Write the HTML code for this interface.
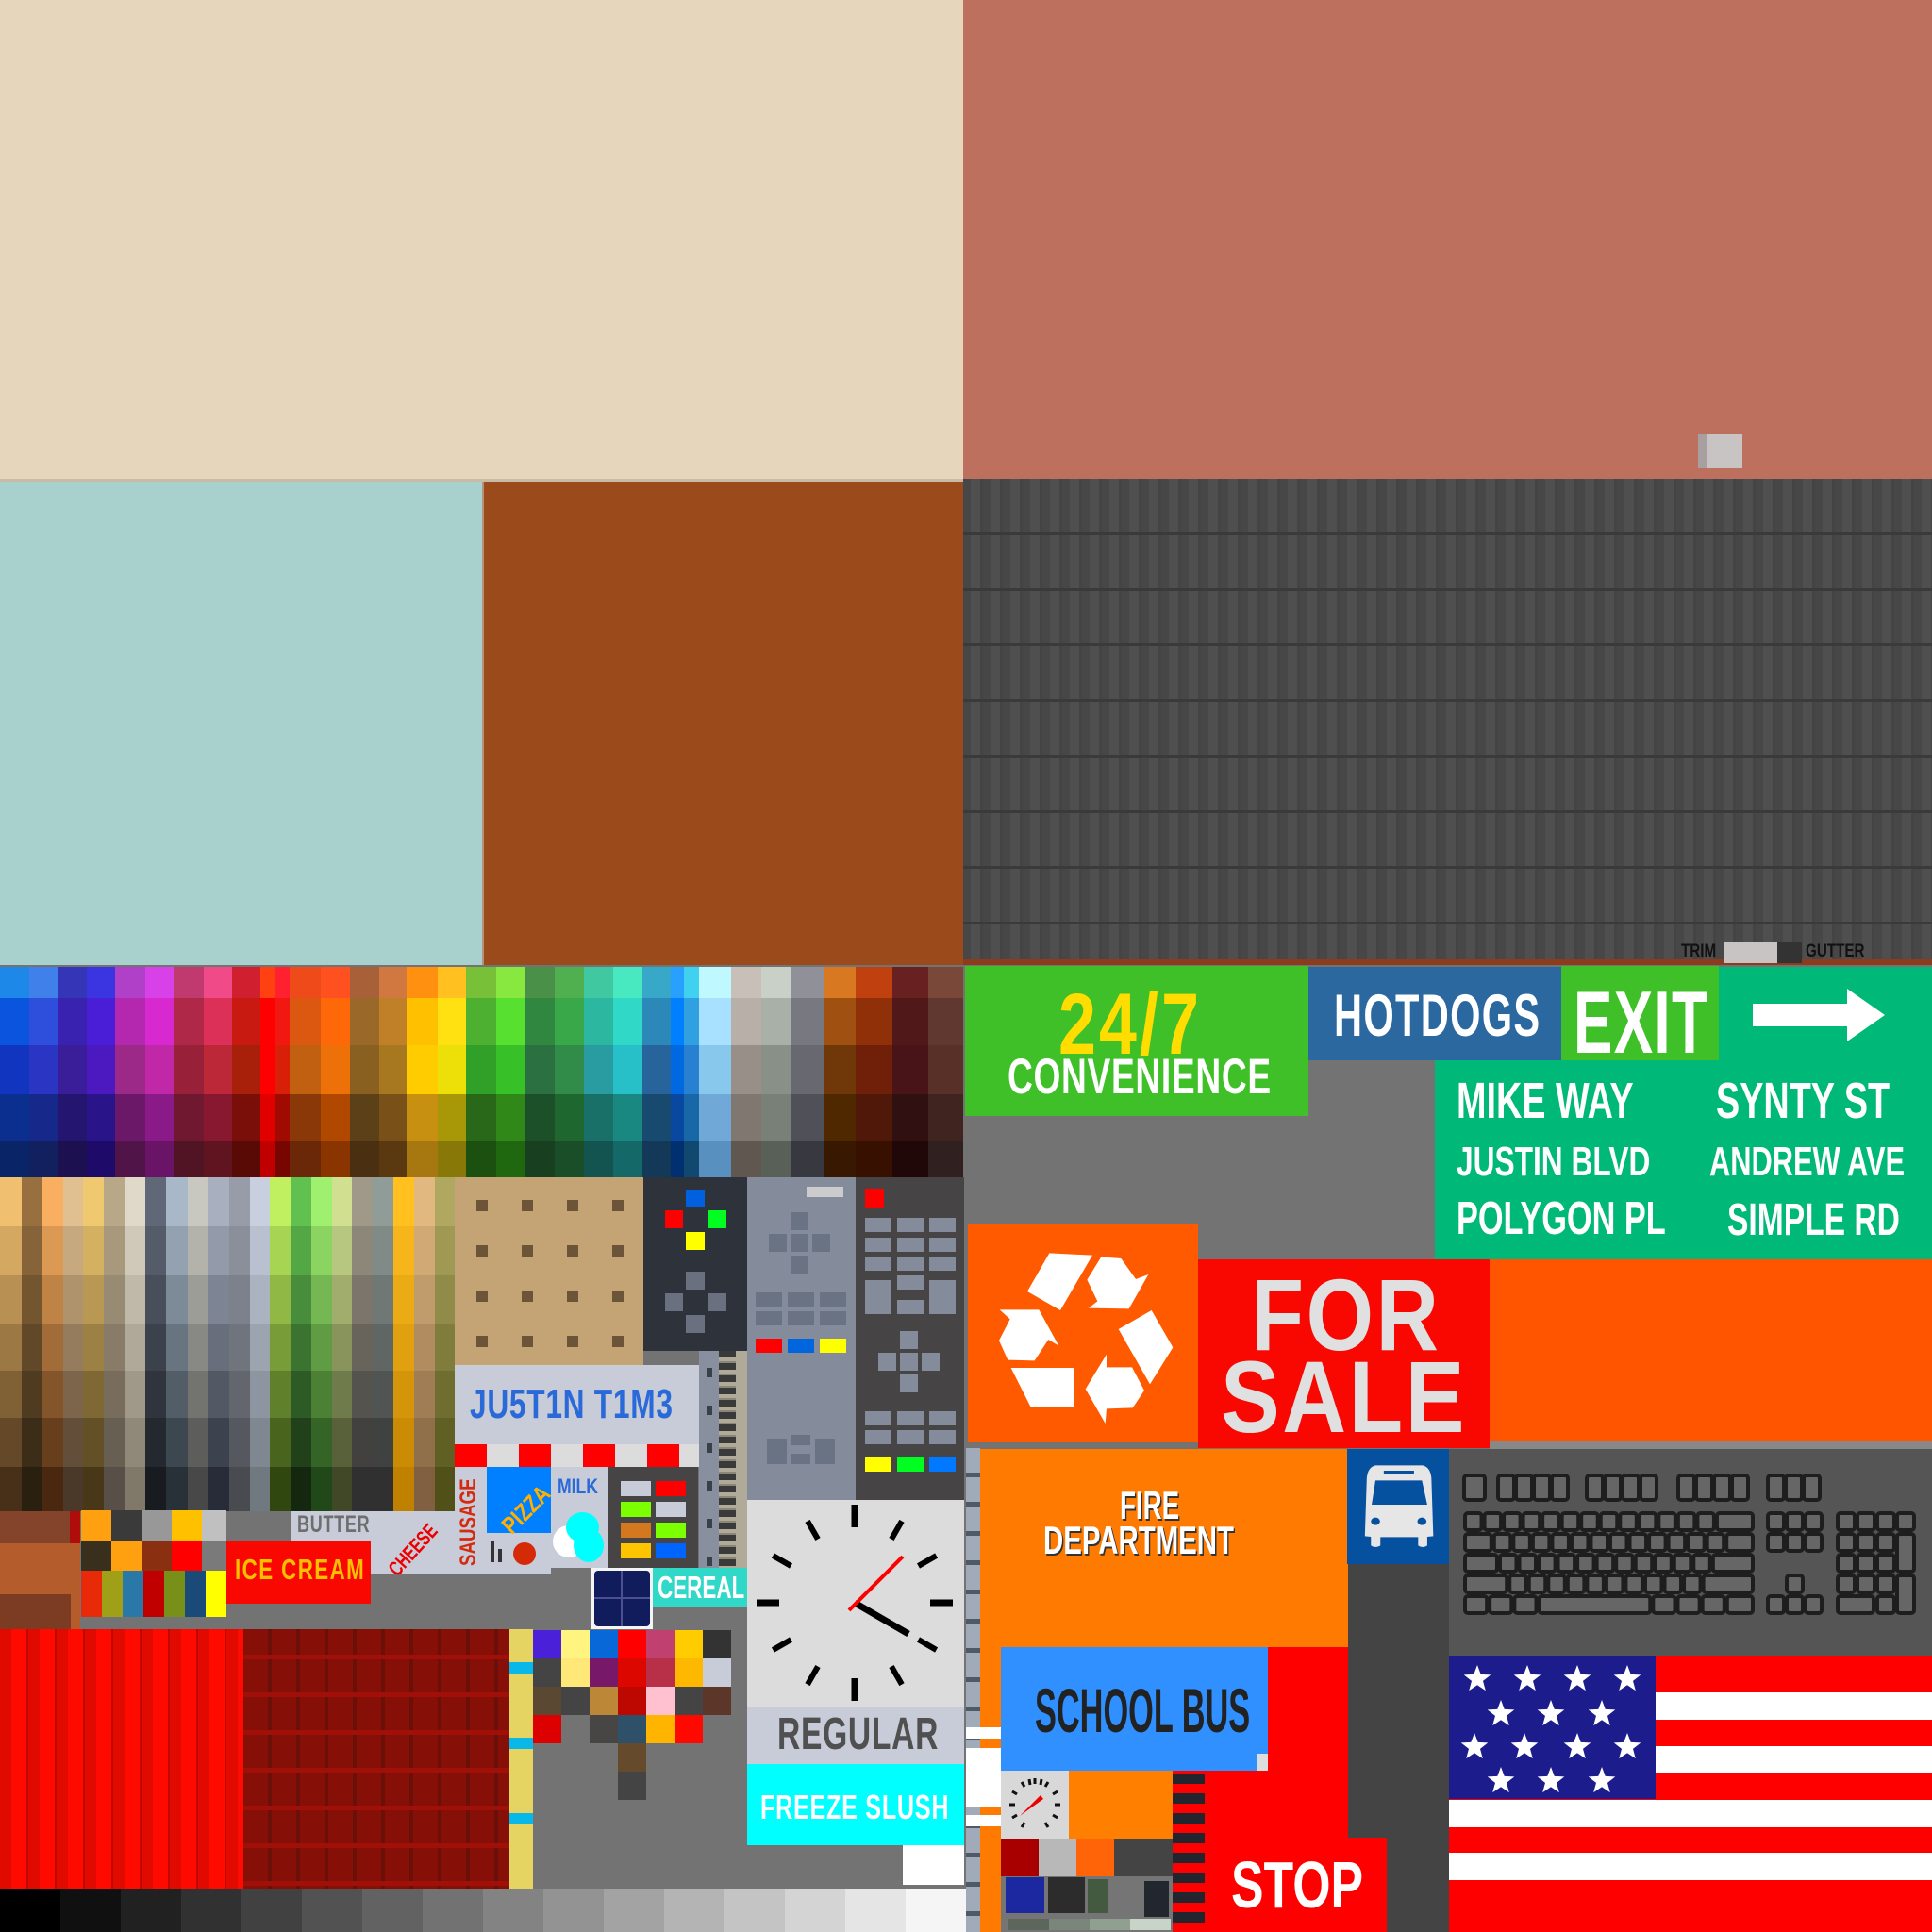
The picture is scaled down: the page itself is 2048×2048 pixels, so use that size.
<!DOCTYPE html>
<html><head><meta charset="utf-8">
<style>
*{margin:0;padding:0;box-sizing:border-box}
html,body{width:2048px;height:2048px;overflow:hidden;background:#737373}
#c{position:relative;width:2048px;height:2048px;overflow:hidden}
#c div,.t,svg{position:absolute}
.t{font-family:"Liberation Sans Narrow","Liberation Sans",sans-serif;font-weight:bold;white-space:nowrap;line-height:1;transform-origin:0 0}
</style></head><body><div id="c">
<div style="left:0;top:0;width:1021px;height:510px;background:#e5d6bc"></div>
<div style="left:0;top:508px;width:1021px;height:3px;background:#c8bca8"></div>
<div style="left:1021px;top:0;width:1027px;height:508px;background:#bd705e"></div>
<div style="left:1800px;top:460px;width:47px;height:36px;background:#c8c4c4;border-left:10px solid #a8a0a0"></div>
<div style="left:0;top:511px;width:511px;height:512px;background:#a8d0cc"></div>
<div style="left:511px;top:511px;width:510px;height:512px;background:#9b4a1c;border-left:2px solid #b89080"></div>
<div id="roof" style="left:1021px;top:508px;width:1027px;height:514px;background-color:#4a4a4a;
background-image:repeating-linear-gradient(180deg,transparent 0,transparent 56px,#3a3a3a 56px,#3a3a3a 59px),
repeating-linear-gradient(90deg,#474747 0,#474747 8px,#4f4f4f 8px,#4f4f4f 18px,#444 18px,#444 21px),
linear-gradient(90deg,rgba(0,0,0,.08) 0,transparent 40%,rgba(0,0,0,.1) 60%,transparent 100%)"></div>
<div style="left:1021px;top:1017px;width:1027px;height:6px;background:#8a3c1c"></div>
<div class="t" style="left:1782px;top:999px;font-size:19px;color:#111;transform:scaleX(.8)">TRIM</div>
<div style="left:1828px;top:999px;width:56px;height:22px;background:#c8c4c4"></div>
<div style="left:1884px;top:999px;width:26px;height:22px;background:#333"></div>
<div class="t" style="left:1914px;top:999px;font-size:19px;color:#111;transform:scaleX(.8)">GUTTER</div>

<div style="left:1023px;top:1024px;width:364px;height:159px;background:#40c028"></div>
<div class="t" style="left:1122px;top:1040px;font-size:92px;color:#ffdd00;transform:scaleX(.78);letter-spacing:4px">24/7</div>
<div class="t" style="left:1068px;top:1115px;font-size:53px;color:#fff;transform:scaleX(.7);letter-spacing:1px">CONVENIENCE</div>
<div style="left:1387px;top:1025px;width:268px;height:99px;background:#2c68a0"></div>
<div class="t" style="left:1414px;top:1046px;font-size:63px;color:#fff;transform:scaleX(.66);letter-spacing:2px">HOTDOGS</div>
<div style="left:1655px;top:1024px;width:167px;height:100px;background:#40c028"></div>
<div class="t" style="left:1668px;top:1037px;font-size:94px;color:#fff;transform:scaleX(.66);letter-spacing:2px">EXIT</div>
<div style="left:1822px;top:1025px;width:226px;height:99px;background:#00b878"></div>
<svg style="left:1858px;top:1048px" width="156" height="58"><polygon points="0,16 100,16 100,0 140,28 100,56 100,40 0,40" fill="#fff"/></svg>
<div style="left:1521px;top:1124px;width:527px;height:211px;background:#00b878"></div>
<div class="t" style="left:1544px;top:1140px;font-size:54px;color:#fff;transform:scaleX(.7)">MIKE WAY</div>
<div class="t" style="left:1819px;top:1140px;font-size:54px;color:#fff;transform:scaleX(.7)">SYNTY ST</div>
<div class="t" style="left:1544px;top:1210px;font-size:44px;color:#fff;transform:scaleX(.72)">JUSTIN BLVD</div>
<div class="t" style="left:1812px;top:1210px;font-size:44px;color:#fff;transform:scaleX(.7)">ANDREW AVE</div>
<div class="t" style="left:1544px;top:1268px;font-size:49px;color:#fff;transform:scaleX(.7)">POLYGON PL</div>
<div class="t" style="left:1831px;top:1270px;font-size:48px;color:#fff;transform:scaleX(.7)">SIMPLE RD</div>
<div style="left:1026px;top:1297px;width:244px;height:232px;background:#ff5a00"></div>
<svg style="left:1024px;top:1290px" width="260" height="250" viewBox="0 0 780 750" fill="#fff">
<polygon points="265,115 402,122 300,297 195,237"/>
<polygon points="430,127 493,132 540,198 580,183 518,292 390,290 418,268 385,200"/>
<polygon points="107,295 232,295 295,410 262,390 218,457 133,455 105,393 140,325"/>
<polygon points="485,357 590,297 658,415 585,532"/>
<polygon points="143,480 345,480 345,603 205,603"/>
<polygon points="380,547 447,437 447,478 528,478 567,552 530,607 447,610 443,657"/>
</svg>
<div style="left:1270px;top:1335px;width:309px;height:200px;background:#f80800"></div>
<div class="t" style="left:1326px;top:1340px;font-size:108px;color:#e0e0e0;transform:scaleX(.85);letter-spacing:3px">FOR</div>
<div class="t" style="left:1294px;top:1427px;font-size:108px;color:#e0e0e0;transform:scaleX(.87);letter-spacing:3px">SALE</div>
<div style="left:1579px;top:1335px;width:469px;height:193px;background:#ff5500"></div>
<div style="left:1579px;top:1528px;width:469px;height:8px;background:#888"></div>

<div style="left:1024px;top:1535px;width:15px;height:513px;background:#a0aab8;background-image:repeating-linear-gradient(180deg,transparent 0,transparent 26px,#4e5a66 26px,#4e5a66 31px)"></div>
<div style="left:1039px;top:1536px;width:390px;height:512px;background:#ff7a00"></div>
<div class="t" style="left:1187px;top:1575px;font-size:42px;color:#fff;transform:scaleX(.66);text-shadow:2px 2px 0 #333">FIRE</div>
<div class="t" style="left:1106px;top:1612px;font-size:42px;color:#fff;transform:scaleX(.7);text-shadow:2px 2px 0 #333">DEPARTMENT</div>
<div style="left:1429px;top:1536px;width:107px;height:512px;background:#444"></div>
<div style="left:1428px;top:1536px;width:108px;height:122px;background:#0650a0"></div>
<svg style="left:1420px;top:1530px" width="628" height="230" viewBox="0 0 1568 690" preserveAspectRatio="none">
<path d="M95,70 L220,70 Q240,75 243,110 L248,295 L232,297 L232,325 Q220,335 208,325 L208,298 L108,298 L108,325 Q95,335 83,325 L83,297 L67,295 L72,110 Q75,75 95,70 Z" fill="#e6e6e6"/>
<rect x="117" y="87" width="80" height="12" fill="#0650a0"/>
<path d="M95,118 L218,118 L232,195 L85,195 Z" fill="#0650a0"/>
<circle cx="95" cy="248" r="12" fill="#0650a0"/><circle cx="218" cy="248" r="12" fill="#0650a0"/>
</svg>
<div style="left:1536px;top:1536px;width:512px;height:219px;background:#555"></div>
<svg id="kb" style="left:1536px;top:1536px" width="512" height="219"></svg>
<div style="left:1061px;top:1746px;width:283px;height:131px;background:#3090ff"></div>
<div class="t" style="left:1097px;top:1780px;font-size:66px;color:#222;transform:scaleX(.52)">SCHOOL BUS</div>
<div style="left:1333px;top:1859px;width:11px;height:18px;background:#ddd"></div>
<div style="left:1344px;top:1746px;width:85px;height:202px;background:#ff0000"></div>
<div style="left:1243px;top:1877px;width:101px;height:171px;background:#ff0000"></div>
<div style="left:1277px;top:1948px;width:193px;height:100px;background:#ff0000"></div>
<div class="t" style="left:1305px;top:1963px;font-size:70px;color:#fff;transform:scaleX(.74)">STOP</div>
<div style="left:1243px;top:1880px;width:34px;height:168px;background:repeating-linear-gradient(180deg,#22252d 0,#22252d 11px,transparent 11px,transparent 21px)"></div>
<div style="left:1024px;top:1831px;width:37px;height:12px;background:#fff"></div>
<div style="left:1024px;top:1853px;width:37px;height:62px;background:#fff"></div>
<div style="left:1024px;top:1924px;width:37px;height:12px;background:#fff"></div>
<div style="left:1061px;top:1877px;width:72px;height:72px;background:#d8d8d8"></div>
<svg style="left:1061px;top:1877px" width="72" height="72"><g stroke="#111" stroke-width="3"><line x1="36" y1="8" x2="36" y2="14"/><line x1="50" y1="12" x2="47" y2="17"/><line x1="60" y1="22" x2="55" y2="25"/><line x1="63" y1="36" x2="57" y2="36"/><line x1="60" y1="50" x2="55" y2="47"/><line x1="50" y1="60" x2="47" y2="55"/><line x1="22" y1="12" x2="25" y2="17"/><line x1="12" y1="22" x2="17" y2="25"/><line x1="9" y1="36" x2="15" y2="36"/><line x1="12" y1="50" x2="17" y2="47"/><line x1="22" y1="60" x2="25" y2="55"/><line x1="30" y1="9" x2="31" y2="15"/><line x1="43" y1="9" x2="42" y2="15"/></g><polygon points="20,48 42,26 45,30" fill="#e00"/></svg>
<div style="left:1133px;top:1877px;width:110px;height:72px;background:#ff8000"></div>
<div style="left:1061px;top:1949px;width:40px;height:40px;background:#a80000"></div>
<div style="left:1101px;top:1949px;width:40px;height:40px;background:#b8b8b8"></div>
<div style="left:1141px;top:1949px;width:40px;height:40px;background:#ff6408"></div>
<div style="left:1181px;top:1949px;width:62px;height:40px;background:#444"></div>
<div style="left:1061px;top:1989px;width:182px;height:59px;background:#757575"></div>
<div style="left:1066px;top:1990px;width:41px;height:38px;background:#1c28a0"></div>
<div style="left:1111px;top:1990px;width:39px;height:38px;background:#2c2c2c"></div>
<div style="left:1153px;top:1992px;width:22px;height:36px;background:#445a40"></div>
<div style="left:1213px;top:1994px;width:26px;height:38px;background:#22262e"></div>
<div style="left:1069px;top:2034px;width:172px;height:12px;background:linear-gradient(90deg,#5c665c 0,#5c665c 25%,#7a867a 25%,#7a867a 50%,#90a090 50%,#90a090 75%,#c8d4c8 75%)"></div>
<div style="left:1536px;top:1755px;width:512px;height:293px;background:#ff0000"></div>
<div style="left:1536px;top:1794px;width:512px;height:29px;background:#fff"></div>
<div style="left:1536px;top:1851px;width:512px;height:28px;background:#fff"></div>
<div style="left:1536px;top:1908px;width:512px;height:29px;background:#fff"></div>
<div style="left:1536px;top:1964px;width:512px;height:29px;background:#fff"></div>
<div style="left:1536px;top:1755px;width:219px;height:152px;background:#1c1c8c"></div>
<svg id="stars" style="left:1536px;top:1755px" width="219" height="152"></svg>

<div id="pal" style="left:0;top:1025px;width:1021px;height:223px"></div>
<div id="pal2" style="left:0;top:1248px;width:482px;height:352px"></div>

<div style="left:482px;top:1248px;width:200px;height:199px;background:#c4a474"></div>
<div style="left:682px;top:1248px;width:111px;height:184px;background:#2e333b"></div>
<div style="left:682px;top:1432px;width:59px;height:15px;background:#737373"></div>
<div style="left:741px;top:1432px;width:21px;height:230px;background:#8890a0;background-image:repeating-linear-gradient(180deg,transparent 0,transparent 18px,#3a404a 18px,#3a404a 28px,transparent 28px,transparent 40px);background-size:6px 40px;background-repeat:repeat-y;background-position:8px 0"></div>
<div style="left:762px;top:1432px;width:30px;height:230px;background:#b0aa98;background-image:repeating-linear-gradient(180deg,#3a3a3a 0,#3a3a3a 7px,#b0aa98 7px,#b0aa98 11px,#8a8678 11px,#8a8678 13px);background-size:18px 100%;background-repeat:no-repeat"></div>
<div style="left:792px;top:1248px;width:115px;height:342px;background:#848c9c"></div>
<div style="left:907px;top:1248px;width:115px;height:342px;background:#464444"></div>
<div style="left:482px;top:1447px;width:259px;height:84px;background:#c8ccd8"></div>
<div class="t" style="left:498px;top:1467px;font-size:44px;color:#2a6ad8;transform:scaleX(.72);letter-spacing:1px">JU5T1N T1M3</div>
<div style="left:482px;top:1531px;width:259px;height:24px;background:repeating-linear-gradient(90deg,#ff0000 0,#ff0000 34px,#dcdcdc 34px,#dcdcdc 68px)"></div>
<div style="left:0;top:1600px;width:85px;height:36px;background:#84442c"></div>
<div style="left:74px;top:1600px;width:11px;height:36px;background:#b00c0c"></div>
<div style="left:0;top:1636px;width:85px;height:54px;background:#b45c2c"></div>
<div style="left:0;top:1690px;width:75px;height:37px;background:#7c3c24"></div>
<div style="left:75px;top:1690px;width:10px;height:37px;background:#b45c2c"></div>
<div style="left:308px;top:1602px;width:276px;height:66px;background:#c8ccd8"></div>
<div class="t" style="left:315px;top:1604px;font-size:25px;color:#6e6e6e;transform:scaleX(.72);letter-spacing:1px">BUTTER</div>
<div class="t" style="left:408px;top:1660px;font-size:22px;color:#e00;transform:rotate(-48deg) scaleX(.72)">CHEESE</div>
<div style="left:240px;top:1633px;width:153px;height:67px;background:#f80800"></div>
<div class="t" style="left:249px;top:1648px;font-size:31px;color:#ffc000;transform:scaleX(.72);letter-spacing:2px">ICE CREAM</div>
<div style="left:480px;top:1555px;width:36px;height:112px;background:#c8ccd8"></div>
<div class="t" style="left:485px;top:1660px;font-size:24px;color:#d42a10;transform:rotate(-90deg) scaleX(.78)">SAUSAGE</div>
<div style="left:516px;top:1555px;width:68px;height:112px;background:#c8ccd8"></div>
<div style="left:516px;top:1555px;width:68px;height:70px;background:#0080ff"></div>
<div class="t" style="left:527px;top:1612px;font-size:26px;color:#ffb000;transform:rotate(-45deg) scaleX(.8)">PIZZA</div>
<div style="left:520px;top:1634px;width:4px;height:22px;background:#333"></div>
<div style="left:528px;top:1642px;width:4px;height:14px;background:#333"></div>
<div style="left:544px;top:1635px;width:24px;height:24px;border-radius:50%;background:#d42a08"></div>
<div style="left:584px;top:1555px;width:61px;height:107px;background:#c8ccd8"></div>
<div class="t" style="left:591px;top:1565px;font-size:22px;color:#2a6ad8;transform:scaleX(.8)">MILK</div>
<div style="left:586px;top:1617px;width:34px;height:34px;border-radius:50%;background:#fff"></div>
<div style="left:608px;top:1620px;width:32px;height:36px;border-radius:50%;background:#00ffff"></div>
<div style="left:600px;top:1603px;width:35px;height:32px;border-radius:50%;background:#00ffff"></div>
<div style="left:645px;top:1555px;width:95px;height:107px;background:#464444"></div>
<div style="left:627px;top:1662px;width:65px;height:65px;background:#f4f4f4"></div>
<div style="left:630px;top:1665px;width:59px;height:59px;background:#101c5c;border-radius:4px;background-image:linear-gradient(90deg,transparent 28px,#4a5090 28px,#4a5090 30px,transparent 30px),linear-gradient(180deg,transparent 28px,#4a5090 28px,#4a5090 30px,transparent 30px)"></div>
<div style="left:692px;top:1662px;width:100px;height:41px;background:#30d8c8"></div>
<div class="t" style="left:697px;top:1666px;font-size:33px;color:#fff;transform:scaleX(.68)">CEREAL</div>
<div style="left:792px;top:1590px;width:230px;height:219px;background:#dcdcdc"></div>
<svg id="clk" style="left:792px;top:1590px" width="230" height="219"></svg>
<div style="left:792px;top:1809px;width:230px;height:61px;background:#c8ccd8"></div>
<div class="t" style="left:824px;top:1815px;font-size:48px;color:#505050;transform:scaleX(.7);letter-spacing:1px">REGULAR</div>
<div style="left:792px;top:1870px;width:230px;height:86px;background:#00ffff"></div>
<div class="t" style="left:806px;top:1898px;font-size:36px;color:#fff;transform:scaleX(.7);letter-spacing:1px">FREEZE SLUSH</div>
<div style="left:957px;top:1956px;width:65px;height:42px;background:#fff"></div>
<div style="left:0;top:1727px;width:258px;height:275px;background:#f00a00;background-image:repeating-linear-gradient(90deg,#e00a00 0,#e00a00 12px,#ff0a00 12px,#ff0a00 28px,#c00800 28px,#c00800 30px)"></div>
<div style="left:258px;top:1727px;width:282px;height:275px;background:#881408;background-image:repeating-linear-gradient(180deg,transparent 0,transparent 27px,#a01008 27px,#a01008 32px,transparent 32px,transparent 40px),repeating-linear-gradient(90deg,#861008 0,#861008 26px,#6a1008 26px,#6a1008 30px)"></div>
<div style="left:540px;top:1727px;width:25px;height:275px;background:#e6d462;background-image:repeating-linear-gradient(180deg,transparent 0,transparent 35px,#08b8e8 35px,#08b8e8 47px,transparent 47px,transparent 80px)"></div>
</div>
<script>
function R(x,y,w,h,c){var d=document.createElement('div');d.style.cssText='left:'+x+'px;top:'+y+'px;width:'+w+'px;height:'+h+'px;background:'+c;document.getElementById('c').appendChild(d);}
var P=[["#1e88e8","#0b55de","#1235c0","#0a2f8e","#0a2468"],["#4080ea","#2e4edc","#2a35c4","#16288a","#132060"],["#3535b8","#3a22b0","#3a1d98","#241670","#1c1050"],["#3a35e0","#4a1ed6","#4c18c0","#2a148a","#1e0a68"],["#b040c8","#b428b0","#9c2888","#6c1868","#501448"],["#d840e8","#d828d0","#c028a8","#8a1a88","#6a1468"],["#c03a70","#b02848","#982038","#701830","#501424"],["#f04a88","#dc3058","#bc2838","#881830","#601420"],["#d02030","#c81a10","#a8200a","#7a0e08","#5a0a04"],["#ff4010","#ff0000","#ff0000","#e00000","#c00000"],["#ff2030","#f01810","#d82008","#a00a00","#780600"],["#ee4a1a","#dc5810","#c06010","#8a3808","#6a2808"],["#ff5020","#ff6808","#ee7008","#b04800","#8a3400"],["#a86038","#9a6828","#8a6020","#5c4018","#4a3010"],["#d07840","#c08028","#a87820","#785018","#5a3810"],["#ff9010","#ffc000","#ffcc00","#c89010","#a87810"],["#ffc020","#ffe010","#ece008","#a89808","#887808"],["#78c038","#4eb030","#30a028","#286818","#1c5010"],["#88e840","#58e030","#38c028","#308818","#206810"],["#4a9048","#308840","#2a7040","#1c5028","#184020"],["#50b050","#38a848","#308c48","#1e6830","#1a4e28"],["#40c8a0","#2cb8a0","#289ca0","#187068","#145450"],["#48e8c0","#30d8c8","#28c0c8","#188880","#146868"],["#38a8c8","#2c88b8","#28649c","#184a70","#143858"],["#28a0ff","#0080ff","#0068e0","#0848a0","#003070"],["#40d0f0","#30a0e0","#2880d0","#1868a8","#104870"],["#c0f8ff","#a8e0ff","#88c8ec","#70a8d8","#5890c0"],["#c8c0b8","#b8b0a8","#989088","#807870","#605850"],["#c8d0c8","#a8b0a8","#889088","#788078","#586058"],["#909098","#787880","#686870","#505058","#383840"],["#d87820","#a05010","#703808","#502800","#381800"],["#c04010","#903008","#702008","#501808","#381000"],["#682020","#501818","#481418","#301010","#200808"],["#7a4838","#603830","#583028","#402420","#302020"]];
var XB=[0,31,61,92,122,154,184,216,246,276,292,307,340,371,402,431,464,494,526,557,588,619,650,681,711,725,741,775,807,838,874,907,946,984,1021];
var YB=[1025,1058,1108,1160,1210,1248];
for(var i=0;i<34;i++)for(var j=0;j<5;j++)R(XB[i],YB[j],XB[i+1]-XB[i],YB[j+1]-YB[j],P[i][j]);
function hx(c){return [parseInt(c.substr(1,2),16),parseInt(c.substr(3,2),16),parseInt(c.substr(5,2),16)]}
function lerp(a,b,t){a=hx(a);b=hx(b);return 'rgb('+a.map(function(v,k){return Math.round(v+(b[k]-v)*t)}).join(',')+')'}
var P2=[["#f0c070","#483018"],["#987040","#2a2010"],["#f8b060","#4a2810"],["#e0c090","#4a3828"],["#f0c870","#483818"],["#b8a888","#585048"],["#e0d8c8","#807868"],["#606878","#181c20"],["#a8b8c8","#283038"],["#c8c8c0","#484848"],["#a8b0c0","#282c38"],["#989ca8","#484c50"],["#c8d0e0","#707880"],["#c0f060","#304810"],["#60c050","#142810"],["#a0f070","#204818"],["#d0e090","#404828"],["#a09888","#303030"],["#909c98","#303030"],["#ffc020","#c08000"],["#e0b880","#806040"],["#b0a860","#505018"]];
var X2=[0,23,44,67,88,110,132,154,176,199,221,243,265,286,308,330,352,373,395,417,439,461,482];
var Y2=[1248,1300,1352,1403,1453,1503,1555,1602];
for(i=0;i<22;i++)for(j=0;j<7;j++)R(X2[i],Y2[j],X2[i+1]-X2[i],Y2[j+1]-Y2[j],lerp(P2[i][0],P2[i][1],j/6));
[511,559,607,655].forEach(function(x){[1277,1325,1373,1421].forEach(function(y){R(x-6,y-5,12,12,"#6c5438")})});
R(727,1261,20,18,"#0060e0");R(705,1283,19,19,"#ff0000");R(750,1283,20,19,"#00ff20");R(727,1306,20,19,"#ffff00");
R(727,1348,20,19,"#6a7080");R(705,1371,19,19,"#6a7080");R(750,1371,20,19,"#6a7080");R(727,1394,20,19,"#6a7080");
var g="#6a7384";R(855,1258,39,11,"#cccccc");R(838,1285,19,19,g);R(815,1308,19,19,g);R(838,1308,19,19,g);R(861,1308,19,19,g);R(838,1331,19,19,g);
[801,835,869].forEach(function(x){R(x,1370,28,15,g);R(x,1390,28,15,g)});
R(801,1419,28,15,"#ff0000");R(835,1419,28,15,"#0066dd");R(869,1419,28,15,"#ffff00");
R(813,1525,21,27,g);R(839,1521,20,11,g);R(839,1541,20,11,g);R(864,1525,21,27,g);
var k="#848c9c";R(917,1260,20,21,"#ff0000");
[917,951,985].forEach(function(x){R(x,1291,28,15,k);R(x,1312,28,15,k);R(x,1332,28,15,k);R(x,1496,28,15,k);R(x,1516,28,15,k)});
R(917,1357,28,36,k);R(951,1352,28,15,k);R(951,1378,28,15,k);R(985,1357,28,36,k);
R(954,1411,19,19,k);R(931,1434,19,19,k);R(954,1434,19,19,k);R(977,1434,19,19,k);R(954,1457,19,19,k);
R(917,1545,28,15,"#ffff00");R(951,1545,28,15,"#00ff20");R(985,1545,28,15,"#0078ff");
var G1=[["#ffa010","#3a3a3a","#989898","#ffc000","#c0c0c0"],["#38301c","#ffa010","#8a3010","#ff0000","#7a7a7a"]];
var gx=[86,118,150,182,214,240];
for(j=0;j<2;j++)for(i=0;i<5;i++)R(gx[i],1601+j*32,gx[i+1]-gx[i],32,G1[j][i]);
["#e82a08","#a0a018","#2a78a8","#c00000","#78901a","#1a4a78","#ffff00"].forEach(function(c,i){R(86+i*22,1665,22,49,c)});
[["#c8ccd8","#ff0000"],["#7cff00","#c8ccd8"],["#d47820","#7cff00"],["#ffc400","#0064ff"]].forEach(function(r,j){R(658,1570+j*22,32,16,r[0]);R(695,1570+j*22,32,16,r[1])});
var G3=[["#4a20d8","#fff480","#0868d8","#ff0000","#c04070","#ffcc00","#333333"],["#444444","#ffe878","#781868","#dc0800","#b83048","#ffb800","#c8ccd8"],["#5a4832","#444444","#bc8838","#bc0800","#ffc0d0","#444444","#5c3628"],["#dc0000",null,"#484644","#2e5068","#ffb400","#ff0800",null]];
for(j=0;j<4;j++)for(i=0;i<7;i++)if(G3[j][i])R(565+i*30,1728+j*30,30,30,G3[j][i]);
R(655,1848,30,30,"#654a2c");R(655,1878,30,30,"#444");
for(i=0;i<16;i++){var v=Math.round(i*245/15);R(i*64,2002,64,46,'rgb('+v+','+v+','+v+')');}
var s='';
function star(cx,cy,r){var p=[];for(var q=0;q<10;q++){var a=-Math.PI/2+q*Math.PI/5,rr=q%2?r*0.42:r;p.push((cx+rr*Math.cos(a)).toFixed(1)+','+(cy+rr*Math.sin(a)).toFixed(1));}return '<polygon fill="#fff" points="'+p.join(' ')+'"/>';}
[[25,[30,83,136,189]],[62,[55,108,162]],[97,[27,80,136,189]],[133,[55,108,162]]].forEach(function(r){r[1].forEach(function(x){s+=star(x,r[0],15)})});
document.getElementById('stars').innerHTML=s;
var kb='';function key(x,y,w,h){kb+='<rect x="'+x+'" y="'+y+'" width="'+w+'" height="'+h+'" rx="3" fill="#666" stroke="#1e1e1e" stroke-width="4"/>';}
key(16,28,22,26);[0,1,2,3].forEach(function(q){key(52+q*19,28,17,26);key(146+q*19,28,17,26);key(243+q*19,28,17,26)});[0,1,2].forEach(function(q){key(338+q*19,28,17,26)});
var rows=[[14,[1,1,1,1,1,1,1,1,1,1,1,1,1,2]],[14,[1.5,1,1,1,1,1,1,1,1,1,1,1,1,1.5]],[13,[1.8,1,1,1,1,1,1,1,1,1,1,1,2.2]],[12,[2.3,1,1,1,1,1,1,1,1,1,1,2.7]],[8,[1.3,1.3,1.3,6,1.3,1.3,1.3,1.5]]];
rows.forEach(function(r,ri){var tot=r[1].reduce(function(a,b){return a+b},0),u=308/tot,x=17;r[1].forEach(function(w){key(x,68+ri*22,w*u-3,18);x+=w*u;});});
[0,1,2].forEach(function(q){key(338+q*20,68,17,18);key(338+q*20,90,17,18);key(338+q*20,156,17,18)});key(358,134,17,18);
[0,1,2,3].forEach(function(q){key(412+q*21,68,18,18)});[0,1,2].forEach(function(q){key(412+q*21,90,18,18);key(412+q*21,112,18,18);key(412+q*21,134,18,18)});
key(475,90,18,40);key(475,134,18,40);key(412,156,38,18);key(454,156,18,18);
document.getElementById('kb').innerHTML=kb;
var ck='',cx=114,cy=109;for(i=0;i<12;i++){var a=i*Math.PI/6,r1=i%3==0?80:78,r2=i%3==0?104:100;ck+='<line x1="'+(cx+r1*Math.sin(a)).toFixed(1)+'" y1="'+(cy-r1*Math.cos(a)).toFixed(1)+'" x2="'+(cx+r2*Math.sin(a)).toFixed(1)+'" y2="'+(cy-r2*Math.cos(a)).toFixed(1)+'" stroke="#000" stroke-width="'+(i%3==0?7:6)+'"/>';}
ck+='<line x1="'+cx+'" y1="'+cy+'" x2="171" y2="142" stroke="#000" stroke-width="7"/><line x1="108" y1="117" x2="165" y2="60" stroke="#f00" stroke-width="4"/>';
document.getElementById('clk').innerHTML=ck;
</script>
</body></html>
